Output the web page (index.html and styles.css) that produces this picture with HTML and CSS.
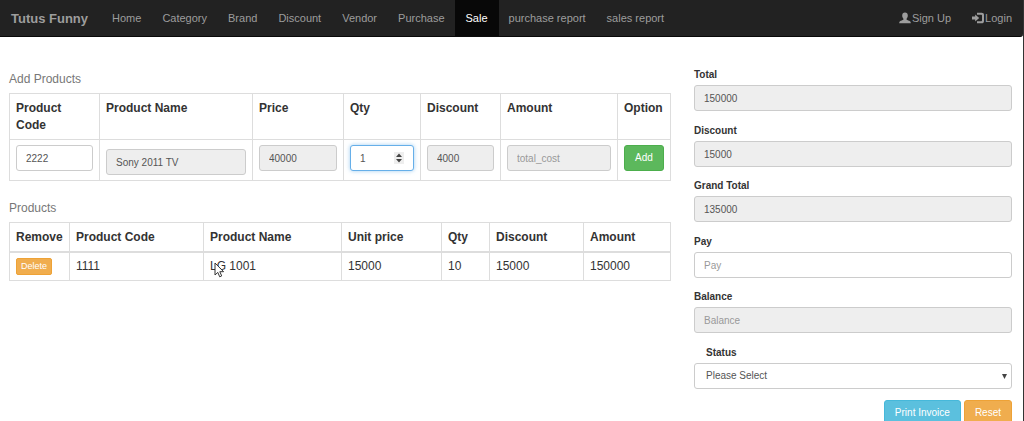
FILE: index.html
```html
<!DOCTYPE html>
<html lang="en">
<head>
<meta charset="utf-8">
<title>Tutus Funny - Sale</title>
<link rel="stylesheet" href="styles.css">
</head>
<body>
<nav class="navbar">
  <a class="brand" href="#">Tutus Funny</a>
  <ul class="nav">
    <li><a href="#">Home</a></li>
    <li><a href="#">Category</a></li>
    <li><a href="#">Brand</a></li>
    <li><a href="#">Discount</a></li>
    <li><a href="#">Vendor</a></li>
    <li><a href="#">Purchase</a></li>
    <li><a class="active" href="#">Sale</a></li>
    <li><a href="#">purchase report</a></li>
    <li><a href="#">sales report</a></li>
  </ul>
  <ul class="nav nav-right">
    <li><a href="#"><svg class="icon" viewBox="0 0 12 12" aria-hidden="true"><path d="M6 .6c1.800 0 2.800 1.200 2.800 3 0 1.300-.5 2.500-1.200 3.200v1c.8.5 2.500.9 3.400 1.500.6.4.8 1 .8 1.900H.2c0-.9.2-1.500.8-1.900.9-.6 2.600-1 3.400-1.500v-1C3.700 6.100 3.200 4.900 3.200 3.600c0-1.800 1-3 2.800-3z"/></svg>Sign Up</a></li>
    <li><a href="#"><svg class="icon" viewBox="0 0 12 12" aria-hidden="true"><path d="M0 4.600h3.200V2.400L7.200 6 3.200 9.600V7.400H0z"/><path d="M5 .8h4.600C11.200.8 12 1.600 12 3.100v5.800c0 1.500-.8 2.300-2.400 2.300H5V9.300h4c.7 0 1-.3 1-1V3.700c0-.7-.3-1-1-1H5z"/></svg>Login</a></li>
  </ul>
</nav>

<main class="page">
  <section class="items">
    <h2 class="caption">Add Products</h2>
    <table class="grid add-grid">
      <colgroup><col class="w-90"><col class="w-153"><col class="w-91"><col class="w-77"><col class="w-80"><col class="w-117"><col class="w-53"></colgroup>
      <thead>
        <tr><th>Product Code</th><th>Product Name</th><th>Price</th><th>Qty</th><th>Discount</th><th>Amount</th><th>Option</th></tr>
      </thead>
      <tbody>
        <tr>
          <td><input class="control" type="text" value="2222" aria-label="Product Code"></td>
          <td class="name-cell"><input class="control" type="text" value="Sony 2011 TV" aria-label="Product Name" disabled></td>
          <td><input class="control" type="text" value="40000" aria-label="Price" disabled></td>
          <td>
            <div class="overlay-box">
              <input class="control qty" type="number" value="1" aria-label="Qty">
              <svg class="spinner" viewBox="0 0 10 12" aria-hidden="true"><path class="spinner-bg" d="M0 0h10v12H0z"/><path d="M2 5l3-3.500L8 5zM2 7h6l-3 3.500z"/></svg>
            </div>
          </td>
          <td><input class="control" type="text" value="4000" aria-label="Discount" disabled></td>
          <td><input class="control" type="text" placeholder="total_cost" aria-label="Amount" disabled></td>
          <td><button class="btn btn-add" type="button">Add</button></td>
        </tr>
      </tbody>
    </table>

    <h2 class="caption">Products</h2>
    <table class="grid list-grid">
      <colgroup><col class="w-60"><col class="w-134"><col class="w-138"><col class="w-100"><col class="w-48"><col class="w-94"><col class="w-87"></colgroup>
      <thead>
        <tr><th>Remove</th><th>Product Code</th><th>Product Name</th><th>Unit price</th><th>Qty</th><th>Discount</th><th>Amount</th></tr>
      </thead>
      <tbody>
        <tr>
          <td><button class="btn btn-small" type="button">Delete</button></td>
          <td>1111</td>
          <td><div class="overlay-box">LG 1001<svg class="pointer" viewBox="0 0 11 16" aria-hidden="true"><path d="M1 1v12l2.800-2.600 1.900 4.400 2-.9-1.900-4.200h3.800z"/></svg></div></td>
          <td>15000</td>
          <td>10</td>
          <td>15000</td>
          <td>150000</td>
        </tr>
      </tbody>
    </table>
  </section>

  <form class="summary">
    <div class="field"><label for="total">Total</label><input class="control" id="total" type="text" value="150000" disabled></div>
    <div class="field"><label for="discount">Discount</label><input class="control" id="discount" type="text" value="15000" disabled></div>
    <div class="field"><label for="grand">Grand Total</label><input class="control" id="grand" type="text" value="135000" disabled></div>
    <div class="field"><label for="pay">Pay</label><input class="control" id="pay" type="text" placeholder="Pay"></div>
    <div class="field"><label for="balance">Balance</label><input class="control" id="balance" type="text" placeholder="Balance" disabled></div>
    <div class="field">
      <label class="indent" for="status">Status</label>
      <div class="overlay-box">
        <select class="control" id="status"><option>Please Select</option></select>
        <svg class="caret" viewBox="0 0 5 5" aria-hidden="true"><path d="M0 0h5L2.500 5z"/></svg>
      </div>
    </div>
    <div class="actions">
      <button class="btn btn-info" type="button">Print Invoice</button>
      <button class="btn btn-warning" type="reset">Reset</button>
    </div>
  </form>
</main>
</body>
</html>
```

FILE: styles.css
```css
* { box-sizing: border-box; }

body {
  margin: 0;
  height: 100vh;
  overflow: hidden;
  border-right: 1px solid #333;
  background: #fff;
  color: #333;
  font-family: "Liberation Sans", Arial, sans-serif;
  font-size: 12px;
  line-height: 17px;
}

/* Navigation */
.navbar {
  display: flex;
  height: 37px;
  padding-right: 1px;
  background: #222;
  border-bottom: 1px solid #090909;
  border-radius: 0 0 3px 0;
}
.navbar a {
  display: flex;
  align-items: center;
  height: 100%;
  padding: 0 10px;
  color: #9d9d9d;
  text-decoration: none;
  white-space: nowrap;
}
.navbar .brand { padding: 0 14px 0 11px; font-size: 13px; font-weight: bold; }
.nav {
  display: flex;
  gap: 1px;
  margin: 0;
  padding: 0;
  list-style: none;
  font-size: 11px;
}
.nav-right { margin-left: auto; }
.nav .active { padding: 0 11px; margin: 0 -1px; background: #080808; color: #fff; }
.icon { width: 12px; height: 12px; margin-right: 1px; fill: #9d9d9d; }

/* Page columns */
.page { display: grid; grid-template-columns: 2fr 1fr; }
.items { padding: 34px 12px 0 9px; }
.summary { padding: 30px 11px 0; }
.caption {
  margin: 0 0 5px;
  color: #777;
  font-size: 12px;
  font-weight: normal;
}

/* Tables */
.grid {
  width: 100%;
  border-collapse: collapse;
  table-layout: fixed;
}
.grid th, .grid td {
  padding: 5px 6px;
  border: 1px solid #ddd;
  text-align: left;
  vertical-align: top;
}
.grid th { padding-top: 6px; }
.add-grid td { padding-top: 5px; }
.grid .name-cell { padding-top: 9px; }
.add-grid { margin-bottom: 19px; }
.list-grid thead th { border-bottom-width: 2px; }
.w-90 { width: 90px; }
.w-153 { width: 153px; }
.w-91 { width: 91px; }
.w-77 { width: 77px; }
.w-80 { width: 80px; }
.w-117 { width: 117px; }
.w-53 { width: 53px; }
.w-60 { width: 60px; }
.w-134 { width: 134px; }
.w-138 { width: 138px; }
.w-100 { width: 100px; }
.w-48 { width: 48px; }
.w-94 { width: 94px; }
.w-87 { width: 87px; }

/* Controls */
.control {
  display: block;
  width: 100%;
  height: 26px;
  margin: 0;
  padding: 4px 9px;
  border: 1px solid #ccc;
  border-radius: 3px;
  background: #fff;
  color: #555;
  font: 10px/16px "Liberation Sans", Arial, sans-serif;
  appearance: none;
}
.control:disabled { background: #eee; }
.control::placeholder { color: #999; }
select.control { padding: 4px 11px; }
.qty {
  border-color: #66afe9;
  box-shadow: 0 0 4px rgba(102, 175, 233, 0.6);
  appearance: textfield;
}
.qty::-webkit-inner-spin-button { display: none; }
.overlay-box { position: relative; }
.spinner {
  position: absolute;
  top: 7px;
  right: 10px;
  width: 10px;
  height: 12px;
  fill: #444;
}
.spinner-bg { fill: #eee; }
.caret {
  position: absolute;
  top: 11px;
  right: 5px;
  width: 5px;
  height: 5px;
  fill: #444;
}
.pointer {
  position: absolute;
  top: 4px;
  left: 4px;
  width: 11px;
  height: 16px;
  fill: #fff;
  stroke: #333;
}

/* Summary form */
.field { margin-bottom: 12px; }
.field:nth-child(even) { margin-bottom: 11px; }
.field label {
  display: block;
  margin-bottom: 2px;
  font-size: 10px;
  font-weight: bold;
  line-height: 16px;
}
.field .indent { padding-left: 12px; }
.actions {
  display: flex;
  justify-content: flex-end;
  gap: 3px;
}

/* Buttons */
.btn {
  display: block;
  height: 26px;
  padding: 0 10px;
  border: 1px solid;
  border-radius: 3px;
  color: #fff;
  font: 10px/16px "Liberation Sans", Arial, sans-serif;
  white-space: nowrap;
}
.btn-add { width: 100%; background: #5cb85c; border-color: #4cae4c; }
.btn-info { background: #5bc0de; border-color: #46b8da; }
.btn-warning { background: #f0ad4e; border-color: #eea236; }
.btn-small {
  height: 17px;
  padding: 0 4px;
  background: #f0ad4e;
  border-color: #eea236;
  border-radius: 2px;
  font-size: 9px;
  line-height: 15px;
}
```
